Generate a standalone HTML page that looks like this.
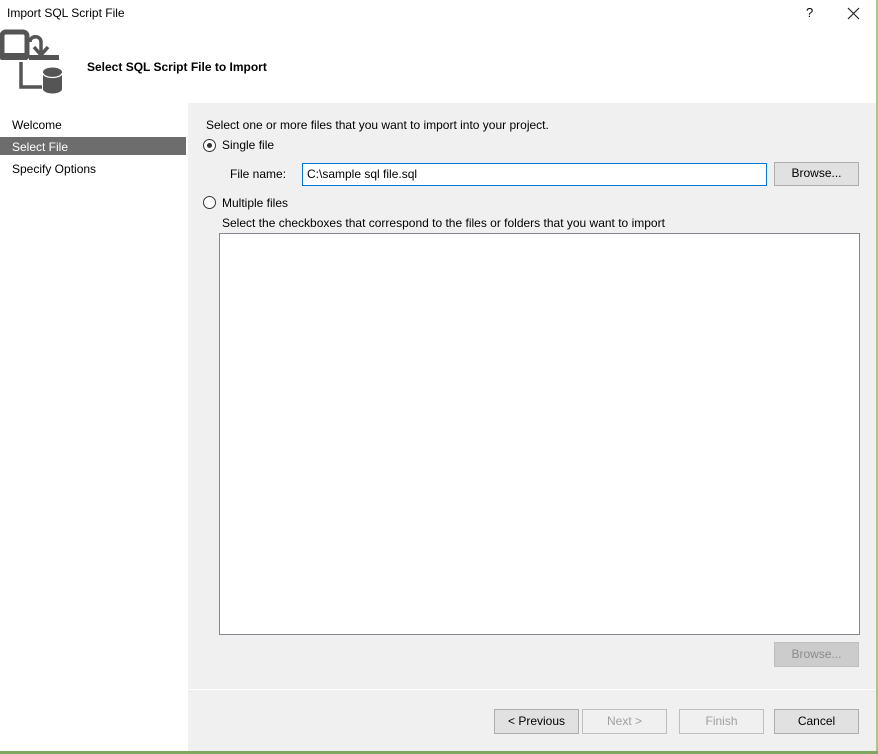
<!DOCTYPE html>
<html><head><style>
*{margin:0;padding:0;box-sizing:border-box}
body{width:878px;height:754px;background:#fff;font-family:"Liberation Sans",sans-serif;font-size:12px;color:#000;position:relative;overflow:hidden}
.a{position:absolute}
.btn{position:absolute;background:#e1e1e1;border:1px solid #adadad;text-align:center;font-size:12px;line-height:20px}
.dis{background:#ccc;border-color:#bfbfbf;color:#8a8a8a}
.dis2{background:#f0f0f0;border-color:#bfbfbf;color:#a0a0a0}
.radio{position:absolute;width:13px;height:13px;border:1px solid #333;border-radius:50%;background:#fff}
</style></head><body>
<div class="a" style="left:7px;top:6px;font-size:12px">Import SQL Script File</div>
<div class="a" style="left:806px;top:5px;font-size:13px">?</div>
<svg class="a" style="left:847px;top:7px" width="13" height="13"><path d="M1 1L12 12M12 1L1 12" stroke="#222" stroke-width="1.2"/></svg>
<svg class="a" style="left:0;top:0" width="70" height="100" viewBox="0 0 70 100">
<g fill="#555" stroke="#555">
<path d="M5 32h18a4 4 0 0 1 4 4v20H2V36a4 4 0 0 1 3-4z" fill="none" stroke-width="5"/>
<rect x="0" y="53" width="28" height="7" stroke="none" rx="2"/>
<path d="M30 42c0-7 11-7 11 0v10" fill="none" stroke-width="3.5"/>
<path d="M34 47l7 8 7-8" fill="none" stroke-width="3.5"/>
<rect x="29" y="55" width="30" height="5" stroke="none"/>
<path d="M21 62v25h21" fill="none" stroke-width="3.5"/>
<path d="M43 72a9.5 4.5 0 0 1 19 0v17a9.5 4.5 0 0 1-19 0z" stroke="none"/>
</g>
<path d="M43 73a9.5 4.5 0 0 0 19 0" fill="none" stroke="#fff" stroke-width="1.3"/>
</svg>
<div class="a" style="left:87px;top:60px;font-weight:bold;font-size:12px">Select SQL Script File to Import</div>
<div class="a" style="left:188px;top:103px;width:688px;height:651px;background:#f0f0f0"></div>
<div class="a" style="left:876px;top:0;width:2px;height:754px;background:#9fce7d"></div>
<div class="a" style="left:0;top:751px;width:878px;height:3px;background:#7fa65f"></div>
<div class="a" style="left:12px;top:118px">Welcome</div>
<div class="a" style="left:0;top:137px;width:186px;height:18px;background:#6d6d6d"></div>
<div class="a" style="left:12px;top:140px;color:#fff">Select File</div>
<div class="a" style="left:12px;top:162px">Specify Options</div>
<div class="a" style="left:206px;top:118px">Select one or more files that you want to import into your project.</div>
<div class="radio" style="left:203px;top:139px"></div>
<div class="a" style="left:207px;top:143px;width:5px;height:5px;border-radius:50%;background:#333"></div>
<div class="a" style="left:222px;top:138px">Single file</div>
<div class="a" style="left:230px;top:167px">File name:</div>
<div class="a" style="left:302px;top:163px;width:465px;height:23px;border:1px solid #0078d7;background:#fff;padding:3px 4px">C:\sample sql file.sql</div>
<div class="btn" style="left:774px;top:162px;width:85px;height:24px">Browse...</div>
<div class="radio" style="left:203px;top:196px"></div>
<div class="a" style="left:222px;top:196px">Multiple files</div>
<div class="a" style="left:222px;top:216px">Select the checkboxes that correspond to the files or folders that you want to import</div>
<div class="a" style="left:219px;top:233px;width:641px;height:402px;border:1px solid #828790;background:#fff"></div>
<div class="btn dis" style="left:774px;top:642px;width:85px;height:25px;line-height:23px">Browse...</div>
<div class="a" style="left:188px;top:689px;width:688px;height:1px;background:#fff"></div>
<div class="btn" style="left:494px;top:709px;width:85px;height:25px;line-height:23px">&lt; Previous</div>
<div class="btn dis2" style="left:582px;top:709px;width:85px;height:25px;line-height:23px">Next &gt;</div>
<div class="btn dis2" style="left:679px;top:709px;width:85px;height:25px;line-height:23px">Finish</div>
<div class="btn" style="left:774px;top:709px;width:85px;height:25px;line-height:23px">Cancel</div>
</body></html>
